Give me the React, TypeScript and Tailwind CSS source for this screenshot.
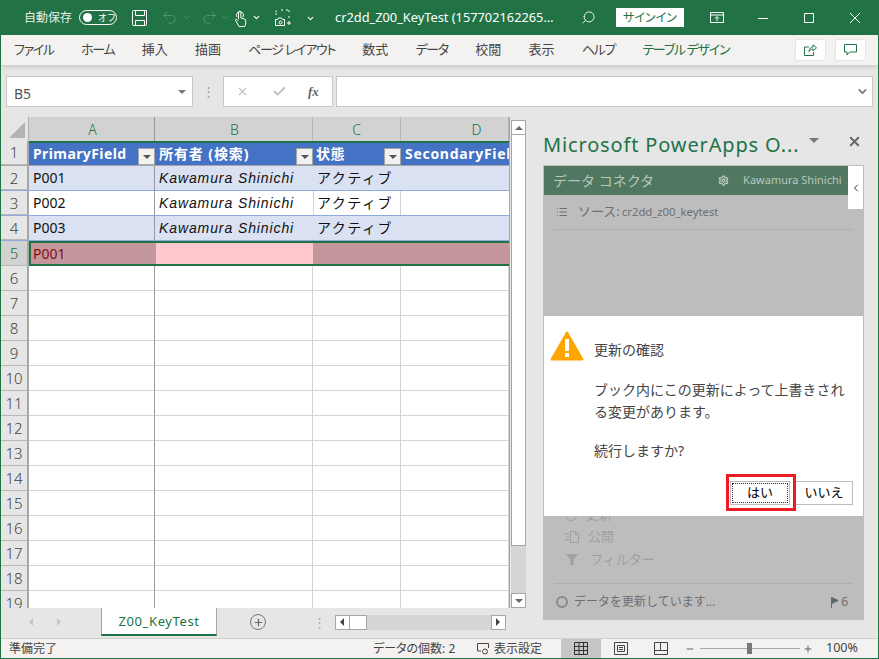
import React from 'react';
import { ChevronDown, ChevronLeft, Search, Settings, Undo2, Redo2, Plus, X, Check, Minus, List } from 'lucide-react';

const columns = [
  { name: 'A', width: 'w-[126px]' },
  { name: 'B', width: 'w-[158px]' },
  { name: 'C', width: 'w-[88px]' },
  { name: 'D', width: 'w-[108px]' },
];

const tabs = [
  { label: 'ファイル', kana: true },
  { label: 'ホーム', kana: true },
  { label: '挿入', kana: false },
  { label: '描画', kana: false },
  { label: 'ページ レイアウト', kana: true },
  { label: '数式', kana: false },
  { label: 'データ', kana: true },
  { label: '校閲', kana: false },
  { label: '表示', kana: false },
  { label: 'ヘルプ', kana: true },
];

const FilterButton = () => (
  <span className="ml-auto mt-[5px] flex h-[17px] w-[17px] shrink-0 items-center justify-center border border-[#a6a6a6] bg-[#f2f2f2]">
    <span className="h-0 w-0 border-x-[4px] border-t-[4px] border-x-transparent border-t-[#555]" />
  </span>
);

const RowHeader = ({ n, active }: { n: number; active?: boolean }) => (
  <div
    className={`flex h-full w-[28px] shrink-0 items-center justify-center border-b border-r-2 border-b-[#b8b8b8] border-r-[#a6a6a6] text-[15px] font-light ${
      active ? 'bg-[#d2d2d2] text-[#217346]' : 'bg-[#e6e6e6] text-[#444]'
    }`}
  >
    {n}
  </div>
);

const HeaderRow = () => (
  <div className="flex h-[25px] border-b border-[#a6a6a6]">
    <RowHeader n={1} />
    <div className="flex w-[126px] border-t-2 border-t-[#217346] bg-[#4472c4] pl-[4px] text-[14px] font-bold leading-[21px] tracking-[0.4px] text-white">
      PrimaryField
      <FilterButton />
    </div>
    <div className="flex w-[158px] border-t-2 border-t-[#217346] bg-[#4472c4] pl-[4px] text-[14px] font-bold leading-[21px] tracking-[0.9px] text-white">
      所有者 (検索)
      <FilterButton />
    </div>
    <div className="flex w-[88px] border-t-2 border-t-[#217346] bg-[#4472c4] pl-[3px] text-[14px] font-bold leading-[21px] tracking-[0.4px] text-white">
      状態
      <FilterButton />
    </div>
    <div className="w-[108px] overflow-hidden whitespace-nowrap border-t-2 border-t-[#217346] bg-[#4472c4] pl-[4px] text-[14px] font-bold leading-[21px] tracking-[0.7px] text-white">
      SecondaryField
    </div>
  </div>
);

const DataRow = ({ n, id, striped }: { n: number; id: string; striped: boolean }) => (
  <div className={`flex h-[25px] border-b border-[#8ea9db] text-[14px] leading-[24px] text-[#111] ${striped ? 'bg-[#d9e1f2]' : 'bg-white'}`}>
    <RowHeader n={n} />
    <div className="w-[126px] border-r border-[#9a9a9a] pl-[4px]">{id}</div>
    <div className="w-[158px] pl-[4px] font-['Liberation_Sans',sans-serif] italic tracking-[0.9px]">Kawamura Shinichi</div>
    <div className={`w-[88px] border-x pl-[3px] tracking-[1.5px] ${striped ? 'border-transparent' : 'border-[#d4d4d4]'}`}>アクティブ</div>
    <div className="w-[108px]" />
  </div>
);

const EmptyRow = ({ n }: { n: number }) => (
  <div className="flex h-[25px] shrink-0 bg-white">
    <RowHeader n={n} />
    {columns.map((c) => (
      <div key={c.name} className={`${c.width} border-b border-r border-[#d4d4d4] ${c.name === 'A' ? 'border-r-[#9a9a9a]' : ''}`} />
    ))}
  </div>
);

const Sheet = () => (
  <div className="flex h-[491px] w-[509px] shrink-0 flex-col overflow-hidden border-r border-[#a6a6a6]">
    <div className="flex h-[24px] shrink-0">
      <div className="relative h-full w-[28px] shrink-0 border-r border-[#b0b0b0] bg-[#e6e6e6]">
        <span className="absolute bottom-[3px] right-[3px] h-0 w-0 border-b-[16px] border-l-[16px] border-b-[#b4b4b4] border-l-transparent" />
      </div>
      {columns.map((c) => (
        <div
          key={c.name}
          className={`${c.width} flex items-center justify-center border-r bg-[#d2d2d2] text-[14px] font-light text-[#217346] ${
            c.name === 'A' ? 'border-[#9a9a9a] pl-[2px]' : 'border-[#b4b4b4]'
          } ${c.name === 'B' ? 'pl-[2px]' : ''} ${c.name === 'D' ? 'pl-[44px]' : ''}`}
        >
          {c.name}
        </div>
      ))}
    </div>
    <HeaderRow />
    <DataRow n={2} id="P001" striped />
    <DataRow n={3} id="P002" striped={false} />
    <DataRow n={4} id="P003" striped />
    <div className="flex h-[25px] shrink-0">
      <RowHeader n={5} active />
      <div className="flex flex-1 border-y-2 border-l-2 border-[#217346] text-[14px] leading-[21px]">
        <div className="w-[125px] bg-[#c3979c] pl-[2px] text-[#8a0c14]">P001</div>
        <div className="w-[157px] bg-[#ffc7ce]" />
        <div className="flex-1 bg-[#c3979c]" />
      </div>
    </div>
    {Array.from({ length: 14 }, (_, i) => (
      <EmptyRow key={i} n={i + 6} />
    ))}
  </div>
);

const VerticalScrollbar = () => (
  <div className="ml-[1px] flex h-[488px] w-[15px] shrink-0 flex-col self-end bg-[#d6d6d6]">
    <div className="flex h-[15px] items-center justify-center border border-[#a6a6a6] bg-white">
      <span className="h-0 w-0 border-x-[4px] border-b-[4px] border-x-transparent border-b-[#666]" />
    </div>
    <div className="h-[411px] border-x border-b border-[#a6a6a6] bg-white" />
    <div className="flex-1" />
    <div className="flex h-[15px] items-center justify-center border border-[#a6a6a6] bg-white">
      <span className="h-0 w-0 border-x-[4px] border-t-[4px] border-x-transparent border-t-[#666]" />
    </div>
  </div>
);

const TabBar = () => (
  <div className="flex h-[28px] items-center bg-[#e6e6e6]">
    <div className="flex w-[100px] items-center gap-[24px] pl-[28px]">
      <span className="h-0 w-0 border-y-[4px] border-r-[4px] border-y-transparent border-r-[#c4c4c4]" />
      <span className="h-0 w-0 border-y-[4px] border-l-[4px] border-y-transparent border-l-[#c4c4c4]" />
    </div>
    <div className="h-full w-[116px] border-x border-b-2 border-x-[#a6a6a6] border-b-[#217346] bg-white text-center text-[13px] leading-[26px] tracking-[0.6px] text-[#217346]">
      Z00_KeyTest
    </div>
    <span className="ml-[33px] flex h-[16px] w-[16px] items-center justify-center rounded-full border border-[#777] text-[#666]">
      <Plus size={11} strokeWidth={2.5} />
    </span>
    <span className="ml-[47px] text-[13px] leading-none tracking-tight text-[#b0b0b0]">⋮</span>
    <div className="ml-[9px] flex h-[15px] w-[171px] items-stretch bg-[#d6d6d6]">
      <div className="flex w-[15px] items-center justify-center border border-[#a6a6a6] bg-white">
        <span className="h-0 w-0 border-y-[4px] border-r-[4px] border-y-transparent border-r-[#444]" />
      </div>
      <div className="w-[17px] border-y border-r border-[#a6a6a6] bg-white" />
      <div className="flex-1" />
      <div className="flex w-[15px] items-center justify-center border border-[#a6a6a6] bg-white">
        <span className="h-0 w-0 border-y-[4px] border-l-[4px] border-y-transparent border-l-[#444]" />
      </div>
    </div>
  </div>
);

const WarningIcon = () => (
  <svg width="34" height="30" viewBox="0 0 34 30">
    <path d="M17 1.5 L32.5 28.5 H1.5 Z" fill="#ffa500" stroke="#ffa500" strokeWidth="2" strokeLinejoin="round" />
    <rect x="15" y="8" width="4" height="12" fill="#fff" />
    <rect x="15" y="22" width="4" height="4" fill="#fff" />
  </svg>
);

const ConfirmDialog = () => (
  <div className="absolute inset-x-0 top-[150px] h-[200px] bg-white text-[14px] text-[#444]">
    <div className="absolute left-[6px] top-[15px]">
      <WarningIcon />
    </div>
    <div className="pl-[50px] pt-[23px] leading-[22px]">
      <p>更新の確認</p>
      <p className="mt-[18px] w-[255px]">ブック内にこの更新によって上書きされる変更があります。</p>
      <p className="mt-[17px]">続行しますか?</p>
    </div>
    <div className="absolute right-[10px] top-[165px] flex h-[24px] items-center text-[13px] text-black">
      <div className="flex h-[24px] w-[60px] items-center justify-center border border-[#bdbdbd] p-[1px]">
        <span className="flex h-full w-full items-center justify-center border border-dotted border-[#333]">はい</span>
      </div>
      <div className="ml-[5px] flex h-[24px] w-[58px] items-center justify-center border border-[#bdbdbd]">いいえ</div>
    </div>
    {/* 赤枠はスクリーンショット上の注釈 */}
    <div className="absolute left-[182px] top-[158px] h-[37px] w-[70px] border-[3px] border-[#ed1c24]" />
  </div>
);

const Panel = () => (
  <div className="flex flex-1 flex-col pl-[16px] pr-[14px]">
    <div className="flex h-[56px] items-center pt-[16px] text-[#217346]">
      <span className="whitespace-nowrap text-[20px] tracking-[0.85px]">Microsoft PowerApps O...</span>
      <span className="mb-[10px] ml-[10px] h-0 w-0 border-x-[5px] border-t-[5px] border-x-transparent border-t-[#777]" />
      <X size={15} strokeWidth={3} className="mb-[8px] ml-auto mr-[2px] text-[#666]" />
    </div>
    <div className="relative flex h-[455px] w-[321px] flex-col border-x border-t border-[#bdbdbd] bg-[#bdbdbd]">
      <div className="flex h-[29px] items-center bg-[#50775f] pl-[9px] text-[#b8c8bd]">
        <span className="text-[14px]">データ コネクタ</span>
        <Settings size={11} strokeWidth={3} className="ml-[64px]" />
        <span className="ml-[14px] whitespace-nowrap text-[11px]">Kawamura Shinichi</span>
      </div>
      <div className="absolute right-0 top-0 flex h-[43px] w-[15px] items-center justify-center bg-white text-[#333]">
        <ChevronLeft size={12} strokeWidth={2} />
      </div>
      <div className="mx-[10px] flex h-[35px] items-center gap-[10px] border-b border-[#aeaeae] pl-[2px] text-[#6e6e6e]">
        <List size={12} />
        <span className="flex items-baseline">
          <span className="text-[13px]">ソース:</span>
          <span className="ml-[2px] text-[11.3px]">cr2dd_z00_keytest</span>
        </span>
      </div>
      <div className="mt-auto flex flex-col text-[13px] text-[#a0a0a0]">
        <div className="flex h-[22px] items-center gap-[9px] pl-[21px]">
          <span className="h-[12px] w-[12px] rounded-full border border-[#a0a0a0]" />
          <span>更新</span>
        </div>
        <div className="flex h-[22px] items-center gap-[8px] pl-[21px]">
          <svg width="15" height="12" viewBox="0 0 15 12" fill="none" stroke="#a0a0a0">
            <path d="M0 3h4M1 6h3M0 9h4M5.5.5h5l3 3v8h-8zM10.5.5v3h3" />
          </svg>
          <span>公開</span>
        </div>
        <div className="flex h-[23px] items-center gap-[12px] pl-[22px]">
          <svg width="12" height="11" viewBox="0 0 12 11" fill="#a0a0a0">
            <path d="M0 0h12L7.5 5.5V11h-3V5.5z" />
          </svg>
          <span>フィルター</span>
        </div>
        <div className="mx-[10px] mt-[12px] flex h-[37px] items-center border-t border-[#aeaeae] pl-[2px] text-[#6e6e6e]">
          <span className="h-[12px] w-[12px] rounded-full border-2 border-[#8a8a8a]" />
          <span className="ml-[6px] text-[12px]">データを更新しています...</span>
          <svg width="8" height="11" viewBox="0 0 8 11" className="ml-auto" fill="#5a6a70">
            <path d="M0 0h1v11H0zM1 0l7 3.5L1 7z" />
          </svg>
          <span className="ml-[2px] mr-[5px] text-[12px]">6</span>
        </div>
      </div>
      <ConfirmDialog />
    </div>
  </div>
);

const StatusBar = () => (
  <div className="flex h-[20px] items-center border-t border-[#d0d0d0] bg-[#f3f2f1] text-[12px] text-[#444]">
    <span className="ml-[8px]">準備完了</span>
    <span className="ml-[316px] w-[104px] [font-feature-settings:'palt']">データの個数: 2</span>
    <svg width="13" height="13" viewBox="0 0 13 13" fill="none" stroke="#444" className="mr-[4px]">
      <path d="M4 9H.5V1.5h11V6" />
      <circle cx="8" cy="9.5" r="2.5" />
    </svg>
    <span className="w-[48px] whitespace-nowrap">表示設定</span>
    <div className="ml-[19px] flex h-full w-[40px] items-center justify-center bg-[#c8c6c4]">
      <svg width="14" height="13" viewBox="0 0 14 13" fill="none" stroke="#333">
        <path d="M.5.5h13v12H.5zM.5 4.500h13M.5 8.500h13M5 .5v12M9.500 .5v12" />
      </svg>
    </div>
    <svg width="14" height="13" viewBox="0 0 14 13" fill="none" stroke="#444" className="ml-[13px]">
      <path d="M.5.5h13v12H.5zM3.500 3.500h7v6h-7zM5 5.500h4M5 7.500h4" />
    </svg>
    <svg width="14" height="13" viewBox="0 0 14 13" fill="none" stroke="#444" className="ml-[26px]">
      <path d="M.5.5h13v12H.5zM.5 8.500h6v-8M6.500 8.500h7" />
    </svg>
    <Minus size={10} className="ml-[17px]" />
    <div className="relative ml-[5px] h-[1px] w-[100px] bg-[#a8a8a8]">
      <span className="absolute left-[47px] top-[-5px] h-[11px] w-[5px] bg-[#777]" />
    </div>
    <Plus size={10} className="ml-[3px]" />
    <span className="ml-[13px] text-[12.5px]">100%</span>
  </div>
);

export default function App() {
  return (
    <div className="flex h-[659px] w-[879px] flex-col overflow-hidden border-b border-[#217346] bg-[#e6e6e6] font-['Noto_Sans','Noto_Sans_CJK_JP',sans-serif]">
      {/* Title bar */}
      <div className="flex h-[35px] shrink-0 items-center bg-[#217346] text-[#e6efe9]">
        <span className="ml-[24px] text-[12px]">自動保存</span>
        <span className="ml-[7px] flex h-[15px] w-[38px] items-center rounded-full border border-white pl-[3px] text-[9px] text-white">
          <span className="h-[9px] w-[9px] rounded-full bg-white" />
          <span className="ml-[6px]">オフ</span>
        </span>
        <svg width="16" height="16" viewBox="0 0 16 16" fill="none" stroke="#fff" className="ml-[15px]">
          <path d="M.5 1.500a1 1 0 0 1 1-1h13v14a1 1 0 0 1-1 1h-12a1 1 0 0 1-1-1zM3.500.5v5h9v-5M3.500 15.500v-5h9v5" />
        </svg>
        <Undo2 size={17} strokeWidth={1.2} className="ml-[13px] text-[#5f9a79]" />
        <ChevronDown size={9} className="ml-[4px] text-[#5f9a79]" />
        <Redo2 size={17} strokeWidth={1.2} className="ml-[10px] text-[#5f9a79]" />
        <ChevronDown size={9} className="ml-[3px] text-[#5f9a79]" />
        <svg width="13" height="18" viewBox="0 0 13 18" fill="none" stroke="#fff" className="ml-[4px]">
          <path d="M3 8a3.500 3.500 0 1 1 6 0M4.500 10V3.500a1.200 1.200 0 0 1 2.400 0V9l4 1.200a1 1 0 0 1 .8 1V15l-1 2.500H5L2.500 13l-1-1.500c-.4-1 .8-1.600 1.500-1l1.500 1.500" />
        </svg>
        <ChevronDown size={9} strokeWidth={3} className="ml-[5px] text-white" />
        <svg width="16" height="18" viewBox="0 0 16 18" fill="none" stroke="#fff" className="ml-[14px]">
          <path d="M1 6V2h2M6 1h3M11 1h3v3M14 7v3" strokeDasharray="2 1" />
          <path d="M.5 10.500h2l1-1.500h3l1 1.500h2v6h-9z" />
          <circle cx="5.500" cy="13.500" r="1.500" />
          <path d="M12 14h4M14 12v4" />
        </svg>
        <ChevronDown size={9} strokeWidth={3} className="ml-[15px] mt-[2px] text-white" />
        <span className="ml-[20px] w-[225px] whitespace-nowrap text-[12.8px] text-white">cr2dd_Z00_KeyTest (157702162265…</span>
        <Search size={15} strokeWidth={1.4} className="ml-[21px] -scale-x-100 text-white" />
        <span className="ml-[20px] flex h-[19px] w-[68px] items-center justify-center bg-white text-[12px] text-[#217346] [font-feature-settings:'palt']">サインイン</span>
        <svg width="14" height="11" viewBox="0 0 14 11" fill="none" stroke="#fff" className="ml-[26px]">
          <path d="M.5.5h13v10H.5zM.5 3h13M7 9V5M5 6.500l2-2 2 2" />
        </svg>
        <svg width="10" height="10" viewBox="0 0 10 10" stroke="#fff" className="ml-[34px]">
          <path d="M0 5.500h10" />
        </svg>
        <svg width="10" height="10" viewBox="0 0 10 10" fill="none" stroke="#fff" className="ml-[36px]">
          <path d="M.5.5h9v9h-9z" />
        </svg>
        <svg width="10" height="10" viewBox="0 0 10 10" stroke="#fff" className="ml-[36px]">
          <path d="M0 0l10 10M10 0L0 10" />
        </svg>
      </div>

      <div className="flex min-h-0 flex-1 flex-col border-x border-[#217346]">
        {/* Ribbon tabs */}
        <div className="flex h-[30px] shrink-0 items-center bg-[#f3f2f1] text-[13px] text-[#444] shadow-[0_2px_4px_rgba(0,0,0,0.12)] [font-feature-settings:'palt']">
          <div className="ml-[13px] flex gap-[27.25px] whitespace-nowrap">
            {tabs.map((t) => (
              <span key={t.label} className={t.kana ? 'tracking-[-1.3px]' : ''}>
                {t.label}
              </span>
            ))}
            <span className="tracking-[-1.3px] text-[#217346]">テーブル デザイン</span>
          </div>
          <button className="ml-auto flex h-[22px] w-[31px] items-center justify-center rounded-[2px] border border-[#e6e6e6] bg-white">
            <svg width="13" height="12" viewBox="0 0 13 12" fill="none" stroke="#217346">
              <path d="M5 3H.5v8.500h9V8M5 7.500c0-3 2-4.500 4-4.500V.8l3.500 3L9 6.800V5c-2 0-3 1-4 2.500z" />
            </svg>
          </button>
          <button className="ml-[9px] mr-[12px] flex h-[22px] w-[31px] items-center justify-center rounded-[2px] border border-[#e6e6e6] bg-white">
            <svg width="13" height="12" viewBox="0 0 13 12" fill="none" stroke="#217346">
              <path d="M.5.5h12v7.500H5.500L3 11V8H.5z" />
            </svg>
          </button>
        </div>

        {/* Formula bar */}
        <div className="flex h-[44px] shrink-0 items-end pb-[2px] pl-[5px]">
          <div className="flex h-[31px] w-[187px] items-center border border-[#c8c8c8] bg-white pl-[7px] pr-[6px] text-[14px] text-[#555]">
            <span className="pt-[3px]">B5</span>
            <span className="ml-auto h-0 w-0 border-x-[4px] border-t-[4px] border-x-transparent border-t-[#777]" />
          </div>
          <span className="flex h-[31px] w-[30px] items-center justify-center text-[13px] text-[#a0a0a0]">⋮</span>
          <div className="flex h-[31px] w-[110px] items-center border border-[#c8c8c8] bg-white pl-[12px] text-[#c0c0c0]">
            <X size={13} strokeWidth={2} />
            <Check size={15} strokeWidth={3} className="ml-[23px]" />
            <span className="ml-[21px] font-['Liberation_Serif',serif] text-[13px] font-bold italic text-[#666]">fx</span>
          </div>
          <div className="ml-[3px] flex h-[31px] w-[537px] items-center justify-end border border-[#c8c8c8] bg-white pr-[3px] text-[#777]">
            <ChevronDown size={13} strokeWidth={3} />
          </div>
        </div>

        {/* Sheet + task pane */}
        <div className="flex min-h-0 flex-1">
          <div className="flex w-[526px] shrink-0 flex-col">
            <div className="flex pt-[8px]">
              <Sheet />
              <VerticalScrollbar />
            </div>
            <TabBar />
          </div>
          <Panel />
        </div>

        <StatusBar />
      </div>
    </div>
  );
}
